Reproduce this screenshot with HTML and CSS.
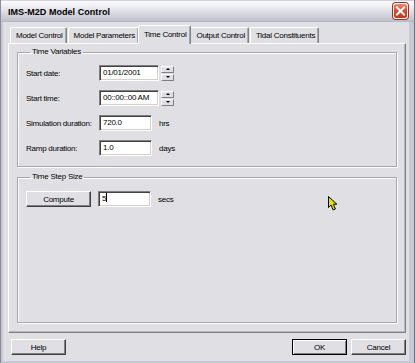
FILE: index.html
```html
<!DOCTYPE html>
<html>
<head>
<meta charset="utf-8">
<title>IMS-M2D Model Control</title>
<link rel="stylesheet" href="styles.css">
</head>
<body>
<div class="window">
  <div class="titlebar">
    <span class="title">IMS-M2D Model Control</span>
    <span class="close">
      <svg width="15" height="16" viewBox="0 0 15 16">
        <path d="M4 4.5 L11 11.5 M11 4.5 L4 11.5" stroke="#fff" stroke-width="2" stroke-linecap="square"/>
      </svg>
    </span>
  </div>
  <div class="frame">
    <div class="client">
      <div class="tabs">
        <div class="tab">Model Control</div>
        <div class="tab">Model Parameters</div>
        <div class="tab active">Time Control</div>
        <div class="tab">Output Control</div>
        <div class="tab">Tidal Constituents</div>
      </div>
      <div class="panel">
        <fieldset class="group vars">
          <legend>Time Variables</legend>
          <div class="row">
            <span class="label">Start date:</span>
            <span class="edit date">01/01/2001</span>
            <span class="spin"><span class="spin-btn up"></span><span class="spin-btn down"></span></span>
          </div>
          <div class="row">
            <span class="label">Start time:</span>
            <span class="edit date">00::00::00 AM</span>
            <span class="spin"><span class="spin-btn up"></span><span class="spin-btn down"></span></span>
          </div>
          <div class="row">
            <span class="label">Simulation duration:</span>
            <span class="edit num">720.0</span>
            <span class="unit">hrs</span>
          </div>
          <div class="row">
            <span class="label">Ramp duration:</span>
            <span class="edit num">1.0</span>
            <span class="unit">days</span>
          </div>
        </fieldset>
        <fieldset class="group step">
          <legend>Time Step Size</legend>
          <div class="row">
            <span class="btn compute">Compute</span>
            <span class="edit num caret">5</span>
            <span class="unit">secs</span>
          </div>
        </fieldset>
      </div>
      <div class="buttons">
        <span class="btn">Help</span>
        <span class="spacer"></span>
        <span class="btn default">OK</span>
        <span class="btn">Cancel</span>
      </div>
    </div>
  </div>
  <svg class="cursor" width="12" height="16" viewBox="0 0 12 16">
    <path d="M0.5 0.5 L0.5 11.5 L3 9 L5.2 14 L7.4 13 L5.3 8.2 L8.8 8.2 Z" fill="#e6e000" stroke="#000" stroke-width="1" stroke-linejoin="miter"/>
  </svg>
</div>
</body>
</html>
```
FILE: styles.css
```css
* { box-sizing: border-box; }

body {
  margin: 0;
  background: #fff;
  font-family: Tahoma, "Liberation Sans", Arial, sans-serif;
  font-size: 8px;
  letter-spacing: -0.25px;
  color: #000;
}

.window {
  position: relative;
  width: 415px;
  height: 363px;
  display: flex;
  flex-direction: column;
  background: #c6c6d2;
}

.titlebar {
  height: 22px;
  flex: none;
  display: flex;
  align-items: center;
  justify-content: space-between;
  padding: 0 6px 1px 7px;
  background: linear-gradient(#a9a9b8 0px, #fbfbfd 1px, #f2f2f6 5px, #dcdce4 12px, #c4c4d0 20px, #b4b4c2 22px);
  border-left: 1px solid #8c8c9c;
  border-right: 1px solid #707080;
}

.title {
  font-weight: bold;
  font-size: 9px;
  letter-spacing: 0.05px;
  color: #000;
  padding-top: 2px;
}

.close {
  width: 15px;
  height: 16px;
  margin-top: 1px;
  border-radius: 3px;
  background: linear-gradient(#e98a76, #d8482c 50%, #c03a20);
  border: 1px solid #fff;
  box-shadow: 0 0 0 1px #a03020;
  display: flex;
}
.close svg { margin: -1px; }

.frame {
  flex: 1;
  display: flex;
  border-left: 1px solid #8c8c9c;
  border-right: 1px solid #6e6e7e;
  border-bottom: 1px solid #6e6e7e;
  padding: 0 5px 2px 2px;
  background: #c8c8d4;
}

.client {
  flex: 1;
  display: flex;
  flex-direction: column;
  background: #e0dfe3;
  padding: 3px 3px 6px 5px;
}

.tabs {
  display: flex;
  align-items: flex-start;
  height: 19px;
  margin-bottom: -1px;
  padding-left: 2px;
  position: relative;
  z-index: 1;
}

.tab {
  height: 16px;
  margin-top: 2px;
  margin-right: 1px;
  padding: 3px 3px 0 5px;
  white-space: nowrap;
  background: #e0dfe3;
  border: 1px solid;
  border-color: #fff #808080 transparent #fff;
  border-bottom: none;
  border-radius: 2px 2px 0 0;
  box-shadow: inset -1px 0 0 #a8a8b0;
}

.tab.active {
  height: 19px;
  margin: 0 -1px 0 -2px;
  padding: 4px 4px 0 5px;
  position: relative;
  z-index: 2;
}

.panel {
  height: 290px;
  border: 1px solid;
  border-color: #fff #808080 #808080 #fff;
  box-shadow: inset -1px -1px 0 #b8b8c0;
  padding: 3px 8px 0 8px;
  display: flex;
  flex-direction: column;
  gap: 5px;
}

.group {
  margin: 0;
  padding: 8px 0 0 8px;
  border: 1px solid #a7a6aa;
  box-shadow: inset 1px 1px 0 #fff, 1px 1px 0 #fff;
  min-width: 0;
}

.group legend {
  margin-left: 4px;
  padding: 0 2px;
  line-height: 10px;
}

.vars {
  height: 120px;
  display: flex;
  flex-direction: column;
  gap: 9px;
}

.step {
  height: 151px;
  padding-top: 9px;
}

.row {
  display: flex;
  align-items: center;
  height: 16px;
}

.label {
  width: 73px;
  flex: none;
  white-space: nowrap;
}

.edit {
  height: 16px;
  background: #fff;
  border: 1px solid;
  border-color: #808080 #fff #fff #808080;
  box-shadow: inset 1px 1px 0 #404040, inset -1px -1px 0 #d4d0c8;
  padding: 0 3px;
  line-height: 14px;
  white-space: nowrap;
}

.edit.date { width: 60px; }
.edit.num { width: 53px; }

.caret::after {
  content: "";
  display: inline-block;
  width: 1px;
  height: 9px;
  background: #000;
  vertical-align: -1px;
}

.spin {
  display: flex;
  flex-direction: column;
  gap: 1px;
  margin-left: 2px;
  width: 13px;
}

.spin-btn {
  height: 7px;
  display: flex;
  align-items: center;
  justify-content: center;
  background: #e0dfe3;
  border: 1px solid;
  border-color: #fff #808080 #808080 #fff;
}

.spin-btn::before {
  content: "";
  width: 0;
  height: 0;
  border-left: 2px solid transparent;
  border-right: 2px solid transparent;
}
.spin-btn.up::before { border-bottom: 2px solid #000; }
.spin-btn.down::before { border-top: 2px solid #000; }

.unit {
  margin-left: 7px;
}

.btn {
  display: flex;
  align-items: center;
  justify-content: center;
  height: 16px;
  width: 55px;
  background: #e0dfe3;
  border: 1px solid;
  border-color: #fff #404040 #404040 #fff;
  box-shadow: inset -1px -1px 0 #808080;
}

.btn.compute {
  width: 65px;
  margin-right: 7px;
}

.btn.default {
  border-color: #000;
  box-shadow: inset 1px 1px 0 #fff, inset -1px -1px 0 #808080;
}

.buttons {
  display: flex;
  gap: 4px;
  margin-top: 6px;
  padding-left: 3px;
}

.spacer { flex: 1; }

.cursor {
  position: absolute;
  left: 328px;
  top: 196px;
}
```
